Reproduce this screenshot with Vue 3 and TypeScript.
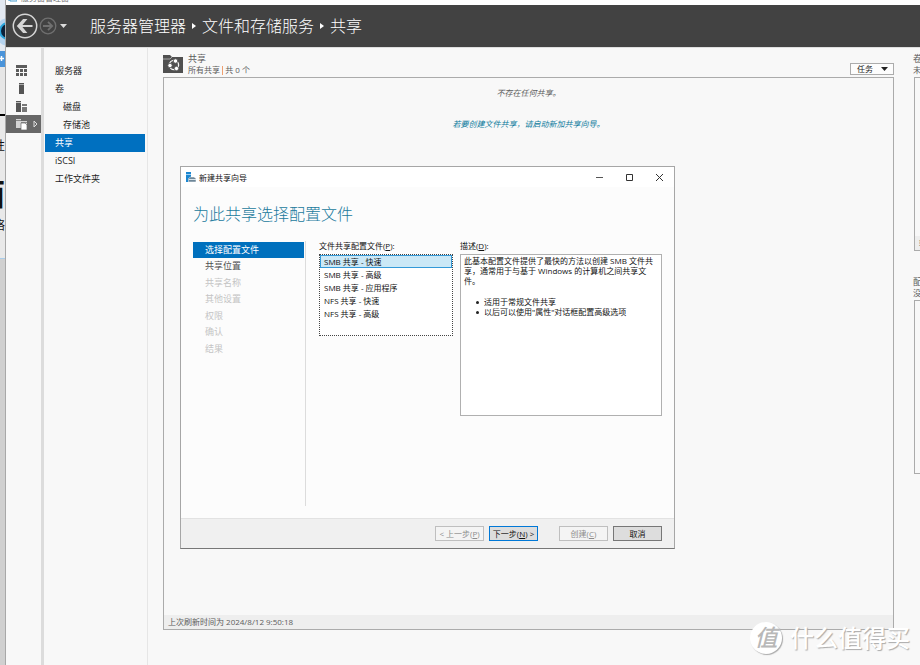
<script setup lang="ts">
import { ref } from 'vue'

interface Step {
  label: string
  state: 'current' | 'ready' | 'pending'
}

const crumbs: string[] = ['服务器管理器', '文件和存储服务', '共享']

const navItems = [
  { label: '服务器', nested: false },
  { label: '卷', nested: false },
  { label: '磁盘', nested: true },
  { label: '存储池', nested: true },
  { label: '共享', nested: false },
  { label: 'iSCSI', nested: false },
  { label: '工作文件夹', nested: false },
]
const activeNav = ref('共享')

const steps: Step[] = [
  { label: '选择配置文件', state: 'current' },
  { label: '共享位置', state: 'ready' },
  { label: '共享名称', state: 'pending' },
  { label: '其他设置', state: 'pending' },
  { label: '权限', state: 'pending' },
  { label: '确认', state: 'pending' },
  { label: '结果', state: 'pending' },
]

const profiles: string[] = [
  'SMB 共享 - 快速',
  'SMB 共享 - 高级',
  'SMB 共享 - 应用程序',
  'NFS 共享 - 快速',
  'NFS 共享 - 高级',
]
const profile = ref(profiles[0])
</script>

<template>
  <div class="desktop">
    <div class="behind" aria-hidden="true">
      <div class="behind-top">
        <svg class="behind-logo" viewBox="0 0 6 67" width="6" height="67">
          <rect width="6" height="67" fill="#e3e9f1" />
          <circle cx="10" cy="32" r="14" fill="#b5d3ee" />
          <circle cx="9" cy="31" r="8" fill="#0c2038" stroke="#2aa5dc" stroke-width="2" />
          <rect y="51" width="6" height="16" fill="#4a94da" />
          <path d="M0 58.500h5M2.500 56v5" stroke="#fff" stroke-width="1.500" />
        </svg>
      </div>
      <span class="behind-text first">性</span>
      <span class="behind-text big">面</span>
      <span class="behind-text last">络</span>
      <div class="behind-floor"></div>
    </div>

    <div class="app">
      <div class="titlebar">
        <svg viewBox="0 0 9 5" width="9" height="5"><path d="M0 0h2v1h7v-1" fill="none" stroke="#4a9fd0" /></svg>
        <span>服务器管理器</span>
      </div>

      <header class="topbar">
        <button class="round" type="button" aria-label="后退">
          <svg viewBox="0 0 26 26" width="26" height="26">
            <circle cx="13" cy="13" r="11.700" fill="none" stroke="#d6d6d6" stroke-width="1.500" />
            <path d="M20.500 13H7M13.500 7H11.500L6 13l5.500 6h2L8.500 13z" fill="#d6d6d6" stroke="#d6d6d6" stroke-width="1.800" />
          </svg>
        </button>
        <button class="round" type="button" aria-label="前进">
          <svg viewBox="0 0 18 18" width="18" height="18">
            <circle cx="9" cy="9" r="7.800" fill="none" stroke="#707070" stroke-width="1.300" />
            <path d="M4 9h9M9 4.800L13.200 9 9 13.200" fill="none" stroke="#707070" stroke-width="1.800" />
          </svg>
        </button>
        <button class="round history" type="button" aria-label="历史记录">
          <svg viewBox="0 0 7 4" width="7" height="4"><path d="M0 0h7L3.500 4z" fill="#dcdcdc" /></svg>
        </button>
        <nav class="crumbs" aria-label="路径">
          <template v-for="(crumb, i) in crumbs" :key="crumb">
            <svg v-if="i > 0" viewBox="0 0 4 6" width="4" height="6"><path d="M0 0l4 3-4 3z" fill="#fff" /></svg>
            <a href="#">{{ crumb }}</a>
          </template>
        </nav>
      </header>

      <div class="body">
        <nav class="rail" aria-label="角色">
          <button type="button" aria-label="仪表板">
            <svg viewBox="0 0 12 11" width="12" height="11">
              <path d="M0 0h11v3H0zM0 4h3v3H0zM4 4h3v3H4zM8 4h3v3H8zM0 8h3v3H0zM4 8h3v3H4zM8 8h3v3H8z" fill="#5c5c5c" />
            </svg>
          </button>
          <button type="button" aria-label="本地服务器">
            <svg viewBox="0 0 12 11" width="12" height="11"><path d="M3 0h5v11H3z" fill="#555" /><path d="M3 1.500h5" stroke="#aaa" /></svg>
          </button>
          <button type="button" aria-label="所有服务器">
            <svg viewBox="0 0 12 11" width="12" height="11">
              <path d="M0 0h5v11H0z" fill="#555" /><path d="M6 3h5v2H6zM6 6h5v5H6z" fill="#777" /><path d="M0 1.500h5" stroke="#bbb" />
            </svg>
          </button>
          <button type="button" class="active" aria-label="文件和存储服务">
            <svg viewBox="0 0 12 11" width="12" height="11">
              <path d="M0 0h5v9H0zM5 2h6v7H5z" fill="#d4d4d4" /><path d="M0 1.500h5M5 3.500h6" stroke="#888" />
              <path d="M5 4h4l2 2v5H5z" fill="#fff" stroke="#6a6a6a" stroke-width=".7" />
            </svg>
            <svg class="expand" viewBox="0 0 5 8" width="5" height="8"><path d="M1 1l3 3-3 3z" fill="none" stroke="#ddd" /></svg>
          </button>
        </nav>

        <nav class="side" aria-label="文件和存储服务">
          <a
            v-for="item in navItems"
            :key="item.label"
            href="#"
            :class="{ nested: item.nested, active: item.label === activeNav }"
            @click.prevent="activeNav = item.label"
          >{{ item.label }}</a>
        </nav>

        <main class="content">
          <section class="tile shares">
            <div class="tile-head">
              <svg class="tile-icon" viewBox="0 0 20 18" width="20" height="18">
                <path d="M0 0h7l2 2h11v16H0z" fill="#505050" /><path d="M0 4h7l2-2" fill="none" stroke="#a5a5a5" />
                <circle cx="11" cy="10" r="4.600" fill="none" stroke="#f4f4f4" stroke-width="1.300" />
                <g fill="#fff" stroke="#505050" stroke-width=".8">
                  <circle cx="12.500" cy="6" r="2.200" />
                  <circle cx="7" cy="10.500" r="2.200" />
                  <circle cx="13.500" cy="13.500" r="2.200" />
                </g>
              </svg>
              <div class="tile-text">
                <h2>共享</h2>
                <p>所有共享 <i class="bar"></i> 共 0 个</p>
              </div>
              <button class="tasks" type="button">
                任务
                <svg viewBox="0 0 7 4" width="7" height="4"><path d="M0 0h7L3.500 4z" fill="#222" /></svg>
              </button>
            </div>
            <div class="tile-panel">
              <div class="empty">
                <p>不存在任何共享。</p>
                <a href="#">若要创建文件共享，请启动新加共享向导。</a>
              </div>
              <footer>上次刷新时间为 2024/8/12 9:50:18</footer>
            </div>
          </section>

          <aside class="others">
            <section class="tile">
              <div class="tile-head"><div class="tile-text"><h2>卷</h2><p>未</p></div></div>
              <div class="tile-panel"><footer>转</footer></div>
            </section>
            <section class="tile">
              <div class="tile-head"><div class="tile-text"><h2>配</h2><p>没</p></div></div>
              <div class="tile-panel"></div>
            </section>
          </aside>
        </main>
      </div>
    </div>

    <div class="dialog" role="dialog" aria-labelledby="dialog-title">
      <div class="dialog-bar">
        <svg viewBox="0 0 10 10" width="10" height="10">
          <path d="M0 0h5v10H0z" fill="#1b86d0" /><path d="M0 2.500h5" stroke="#9fd0f2" />
          <path d="M2.500 6.500L4.500 5h3.500l2 1.500V10H2.500z" fill="#6e8799" stroke="#fff" stroke-width=".5" /><path d="M3 7.500h7" stroke="#dce6ec" />
        </svg>
        <span id="dialog-title">新建共享向导</span>
        <div class="window-buttons">
          <button type="button" aria-label="最小化"><svg viewBox="0 0 7 7" width="7" height="7"><path d="M0 3.500h7" stroke="#555" /></svg></button>
          <button type="button" aria-label="最大化"><svg viewBox="0 0 7 7" width="7" height="7"><path d="M.5.5h6v6h-6z" fill="none" stroke="#333" /></svg></button>
          <button type="button" aria-label="关闭"><svg viewBox="0 0 7 7" width="7" height="7"><path d="M0 0l7 7M7 0L0 7" stroke="#333" /></svg></button>
        </div>
      </div>

      <div class="dialog-main">
        <h1>为此共享选择配置文件</h1>
        <div class="columns">
          <ol class="steps">
            <li v-for="step in steps" :key="step.label" :class="step.state">{{ step.label }}</li>
          </ol>
          <div class="field profiles">
            <label for="profile">文件共享配置文件(<u>P</u>):</label>
            <select id="profile" v-model="profile" size="6">
              <option v-for="p in profiles" :key="p" :value="p">{{ p }}</option>
            </select>
          </div>
          <div class="field description">
            <span id="desc-label">描述(<u>D</u>):</span>
            <div class="desc-box" role="region" aria-labelledby="desc-label">
              <p>此基本配置文件提供了最快的方法以创建 SMB 文件共享，通常用于与基于 Windows 的计算机之间共享文件。</p>
              <ul>
                <li>适用于常规文件共享</li>
                <li>以后可以使用"属性"对话框配置高级选项</li>
              </ul>
            </div>
          </div>
        </div>
      </div>

      <div class="dialog-foot">
        <button type="button" disabled>&lt; 上一步(<u>P</u>)</button>
        <button type="button" class="primary">下一步(<u>N</u>) &gt;</button>
        <button type="button" class="apart" disabled>创建(<u>C</u>)</button>
        <button type="button">取消</button>
      </div>
    </div>

    <div class="watermark">
      <span class="seal">值</span>
      <span>什么值得买</span>
    </div>
  </div>
</template>

<style>
body {
  margin: 0;
  background: #f8f8f8;
}
</style>

<style scoped>
.desktop {
  position: relative;
  display: flex;
  min-height: 100vh;
  overflow: hidden;
  font: 8px/11px "Open Sans", "Noto Sans CJK SC", sans-serif;
  color: #1c1c1c;
}
.desktop *,
.desktop {
  box-sizing: border-box;
}
h1,
h2,
p,
ul,
ol {
  margin: 0;
  padding: 0;
  font-weight: 400;
}
button {
  font: inherit;
  color: inherit;
  padding: 0;
  border: 0;
  background: none;
}
a {
  color: inherit;
  text-decoration: none;
}
svg {
  display: block;
  flex: none;
}

/* window lying behind the application */
.behind {
  display: flex;
  flex-direction: column;
  align-items: flex-end;
  width: 6px;
  flex: none;
  overflow: hidden;
  background: #e9e9e9;
  border-right: 1px solid #a8a8a8;
  color: #111;
}
.behind-top {
  height: 116px;
  flex: none;
  border-bottom: 2px solid #000;
  background: #e6e6e6;
}
.behind-text {
  flex: none;
  font-size: 12px;
  line-height: 16px;
}
.behind-text.first {
  margin-top: 22px;
}
.behind-text.big {
  margin-top: 20px;
  font-size: 30px;
  line-height: 40px;
  font-weight: 700;
}
.behind-text.last {
  margin-top: 4px;
}
.behind-floor {
  flex: 1;
  width: 100%;
  margin-top: 24px;
  border-top: 1px solid #a9cdea;
  background: #d0d0d0;
}

.app {
  flex: 1;
  min-width: 0;
  display: flex;
  flex-direction: column;
  background: #f8f8f8;
}
.titlebar {
  display: flex;
  align-items: flex-end;
  gap: 4px;
  height: 5px;
  padding-left: 2px;
  overflow: hidden;
  background: #fff;
  color: #777;
}
.titlebar span {
  padding-bottom: 2px;
  line-height: 11px;
}
.topbar {
  display: flex;
  align-items: center;
  height: 42px;
  padding-left: 6px;
  background: #424242;
  color: #fff;
}
.round {
  margin-right: 1px;
}
.history {
  margin-left: 2px;
}
.crumbs {
  display: flex;
  align-items: center;
  gap: 6px;
  margin-left: 22px;
  font-size: 16px;
  line-height: 24px;
  font-weight: 300;
}

.body {
  flex: 1;
  display: flex;
  border-top: 1px solid #dedede;
}
.rail {
  width: 38px;
  flex: none;
  padding-top: 13px;
  border-right: 3px solid #dcdcdc;
}
.rail button {
  display: flex;
  align-items: center;
  width: 100%;
  height: 18px;
  padding-left: 10px;
}
.rail .active {
  background: #686868;
}
.expand {
  margin-left: 5px;
}
.side {
  width: 104px;
  flex: none;
  padding: 14px 2px 0 1px;
  border-right: 1px solid #e6e6e6;
  font-size: 9px;
}
.side a {
  display: block;
  height: 18px;
  padding-left: 10px;
  line-height: 18px;
}
.side .nested {
  padding-left: 18px;
}
.side .active {
  background: #0070c0;
  color: #fff;
}

.content {
  flex: 1;
  min-width: 0;
  display: flex;
  gap: 19px;
  padding: 0 0 35px 15px;
}
.tile {
  display: flex;
  flex-direction: column;
  color: #5c5c5c;
}
.shares {
  flex: 1;
  min-width: 0;
}
.tile-head {
  display: flex;
  align-items: flex-start;
  gap: 5px;
  height: 29px;
  padding-top: 5px;
}
.tile-icon {
  margin-top: 2px;
}
.tile-text {
  white-space: nowrap;
}
.tile-text h2 {
  font-size: 9px;
  line-height: 11px;
}
.bar {
  display: inline-block;
  width: 1px;
  height: 9px;
  vertical-align: middle;
  background: #f0a070;
}
.tasks {
  display: flex;
  align-items: center;
  justify-content: space-between;
  width: 44px;
  height: 12px;
  margin: 10px 0 0 auto;
  padding: 0 5px 0 6px;
  border: 1px solid #acacac;
  background: #fdfdfd;
  color: #222;
  line-height: 10px;
}
.tile-panel {
  flex: 1;
  display: flex;
  flex-direction: column;
  justify-content: space-between;
  border: 1px solid #ababab;
}
.tile-panel footer {
  height: 14px;
  margin-top: auto;
  padding-left: 4px;
  line-height: 14px;
  background: #eee;
}
.empty {
  display: flex;
  flex-direction: column;
  align-items: center;
  gap: 20px;
  padding-top: 9px;
  font-style: italic;
}
.empty a {
  color: #0b7a9c;
}
.others {
  display: flex;
  flex-direction: column;
  gap: 20px;
  width: 7px;
  flex: none;
  overflow: hidden;
}
.others .tile {
  width: 300px;
}
.others .tile-panel {
  flex: none;
  height: 174px;
  margin-left: 1px;
}

.dialog {
  position: absolute;
  left: 180px;
  top: 166px;
  width: 495px;
  border: 1px solid #a6a6a6;
  border-bottom-color: #777;
  background: #fcfcfc;
  color: #111;
}
.dialog-bar {
  display: flex;
  align-items: center;
  gap: 3px;
  height: 20px;
  padding-left: 5px;
  background: #fff;
}
.window-buttons {
  display: flex;
  margin-left: auto;
}
.window-buttons button {
  display: grid;
  place-items: center;
  width: 30px;
  height: 20px;
}
.dialog-main {
  padding: 15px 12px 12px;
}
.dialog-main h1 {
  font-size: 16px;
  line-height: 24px;
  font-weight: 300;
  color: #1a7a9c;
}
.columns {
  display: flex;
  margin-top: 15px;
}
.steps {
  display: grid;
  grid-template-rows: repeat(7, 1fr);
  width: 113px;
  height: 265px;
  flex: none;
  padding: 1px 1px 149px 0;
  border-right: 1px solid #dcdcdc;
  list-style: none;
  font-size: 9px;
  line-height: 16px;
}
.steps li {
  padding-left: 12px;
}
.steps .current {
  background: #0070bd;
  color: #fff;
}
.steps .ready {
  color: #505050;
}
.steps .pending {
  color: #c4c4c4;
}
.field {
  display: flex;
  flex-direction: column;
  gap: 3px;
  line-height: 10px;
}
.profiles {
  width: 134px;
  margin-left: 13px;
}
.description {
  flex: 1;
  margin-left: 7px;
}
select {
  height: 82px;
  padding: 0;
  border: 1px dotted #444;
  border-radius: 0;
  outline: 0;
  background: #fff;
  font: inherit;
  color: inherit;
  overflow: hidden;
}
option {
  height: 13px;
  min-height: 13px;
  padding: 0 3px;
  border: 1px solid transparent;
  line-height: 11px;
  color: #111;
}
option:checked {
  border-color: #3399d8;
  background: #cbe8f6 linear-gradient(#cbe8f6, #cbe8f6);
  color: #111;
}
.desc-box {
  height: 162px;
  padding: 1px 3px;
  border: 1px solid #b0b0b0;
  background: #fff;
}
.desc-box ul {
  margin-top: 11px;
  padding-left: 20px;
  list-style: none;
}
.desc-box li {
  display: flex;
  align-items: center;
}
.desc-box li::before {
  content: "";
  width: 3px;
  height: 3px;
  margin: 0 5px 0 -8px;
  border-radius: 50%;
  background: #222;
}
.dialog-foot {
  display: flex;
  justify-content: flex-end;
  gap: 5px;
  height: 30px;
  padding: 7px 12px 0 0;
  border-top: 1px solid #e2e2e2;
  background: #f0f0f0;
}
.dialog-foot button {
  width: 49px;
  height: 15px;
  border: 1px solid #777;
  background: #ddd;
  line-height: 12px;
  white-space: nowrap;
}
.dialog-foot button:disabled {
  border-color: #bfbfbf;
  background: #f4f4f4;
  color: #8c8c8c;
}
.dialog-foot .primary {
  border-color: #0078d7;
}
.dialog-foot .apart {
  margin-left: 16px;
}

.watermark {
  position: absolute;
  right: 10px;
  bottom: 11px;
  display: flex;
  align-items: center;
  gap: 8px;
  font-size: 24px;
  line-height: 32px;
  font-weight: 500;
  color: #fff;
  text-shadow: 1px 1px 1px #aaa;
}
.seal {
  width: 32px;
  height: 32px;
  border-radius: 50%;
  background: #fff;
  box-shadow: 1px 1px 1px #aaa;
  font-size: 23px;
  font-style: italic;
  line-height: 31px;
  text-align: center;
  color: #b8b8b8;
  text-shadow: none;
}
</style>
